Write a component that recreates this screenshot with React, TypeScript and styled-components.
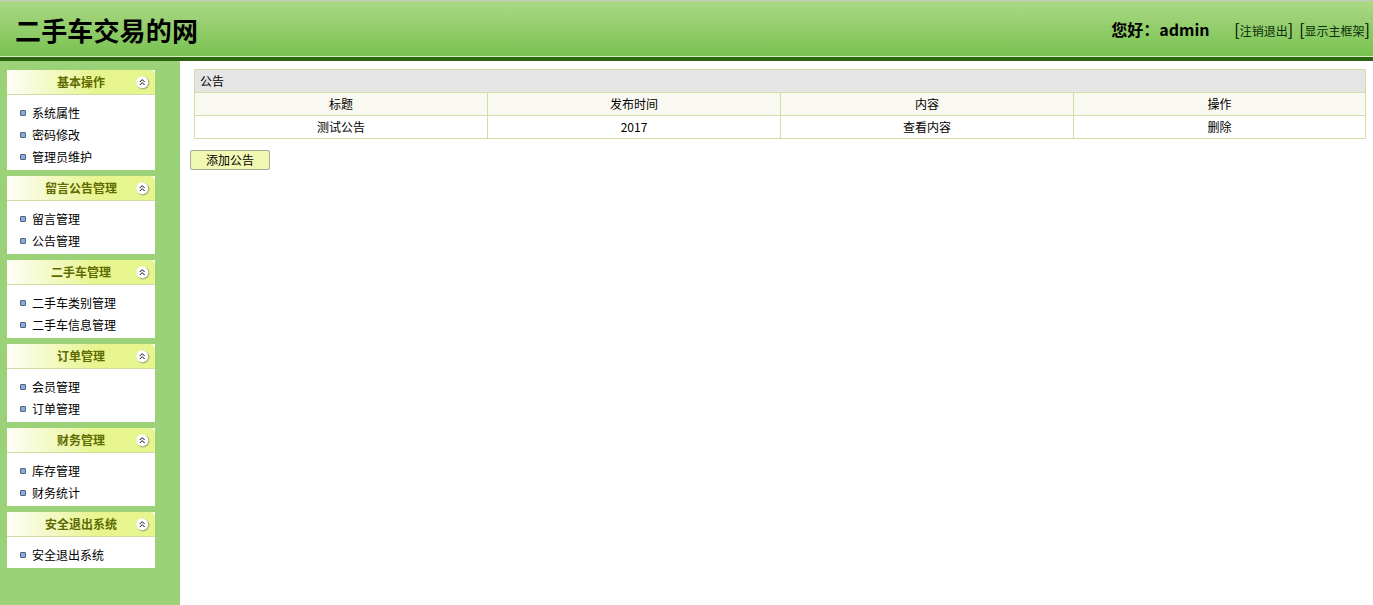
import React from "react";
import styled, { createGlobalStyle } from "styled-components";

const Global = createGlobalStyle`
  html, body { margin: 0; padding: 0; background: #fff; }
  body { font-family: "Liberation Sans", "Noto Sans CJK SC", sans-serif; font-size: 12px; color: #000; }
`;

const Page = styled.div`
  width: 1373px;
  height: 605px;
  display: flex;
  flex-direction: column;
  overflow: hidden;
`;

const Header = styled.header`
  height: 56px;
  flex: none;
  box-sizing: border-box;
  padding: 0 3px 0 15px;
  display: flex;
  align-items: center;
  justify-content: space-between;
  border-top: 1px solid #c8c8c8;
  background: linear-gradient(#acd886, #78c250);
`;

const Brand = styled.h1`
  margin: 3px 0 0;
  font-family: "Noto Sans CJK SC", sans-serif;
  font-size: 26px;
  font-weight: 700;
  letter-spacing: 0.15px;
  line-height: 60px;
  height: 60px;
`;

const HeaderRight = styled.div`
  display: flex;
  align-items: center;
  height: 60px;
  margin-top: 1px;
  font-family: "Noto Sans CJK SC", sans-serif;
`;

const Greeting = styled.span`
  font-size: 16px;
  font-weight: 700;
  width: 123px;
  white-space: nowrap;
`;

const Bracket = styled.a`
  font-size: 16px;
  margin-left: ${(p: { $gap: number }) => p.$gap}px;
  color: #000;
  white-space: nowrap;
  small { font-size: 12px; color: #0c2c0a; }
`;

const Rule = styled.div`
  flex: none;
  height: 5px;
  border-top: 1px solid #d6efc2;
  box-sizing: border-box;
  background: #2a6410;
`;

const Body = styled.div`
  flex: 1;
  display: flex;
  min-height: 0;
`;

const Sidebar = styled.aside`
  width: 180px;
  flex: none;
  box-sizing: border-box;
  padding: 9px 25px 0 7px;
  background: #9bd177;
  display: flex;
  flex-direction: column;
  gap: 6px;
`;

const Panel = styled.section`
  background: #fff;
`;

const PanelHead = styled.div`
  height: 25px;
  box-sizing: border-box;
  position: relative;
  padding-bottom: 2px;
  border-bottom: 1px solid #cfdca6;
  border-radius: 5px 5px 0 0;
  background: linear-gradient(to right, #fefef8, #e6f58e 60%, #e6f58e);
  display: flex;
  align-items: center;
  justify-content: center;
  font-family: "Noto Sans CJK SC", sans-serif;
  font-weight: 700;
  font-size: 12px;
  color: #5f6a00;
`;

const Toggle = styled.svg`
  position: absolute;
  right: 5px;
  top: 5px;
  width: 15px;
  height: 15px;
`;

const MenuList = styled.ul`
  list-style: none;
  margin: 0;
  padding: 7px 0 2px 13px;
  font-family: "Noto Sans CJK SC", sans-serif;
`;

const MenuItem = styled.li`
  height: 22px;
  line-height: 22px;
  display: flex;
  align-items: center;
  gap: 6px;
  font-size: 12px;
`;

const Bullet = styled.i`
  display: block;
  width: 4px;
  height: 4px;
  border: 1px solid #555f78;
  border-radius: 1px;
  background: #86aee6;
`;

const Main = styled.main`
  flex: 1;
  min-width: 0;
  padding: 8px 7px 0 10px;
  font-family: "Noto Sans CJK SC", sans-serif;
`;

const Table = styled.table`
  width: 1172px;
  margin-left: 4px;
  border-collapse: collapse;
  table-layout: fixed;
  font-size: 12px;
  td, th {
    border: 1px solid #d3dea6;
    padding: 0 0 2px;
    height: 20px;
    text-align: center;
    font-weight: 400;
  }
`;

const Column = styled.col<{ $width: number }>`
  width: ${(p) => p.$width}px;
`;

const TitleCell = styled.th`
  && { text-align: left; padding-left: 5px; background: #e5e5e5; }
`;

const HeadRow = styled.tr`
  background: #f9f9f1;
`;

const AddButton = styled.button`
  display: block;
  margin-top: 11px;
  width: 80px;
  height: 20px;
  padding: 0 0 2px;
  box-sizing: border-box;
  border: 1px solid #a9aa98;
  border-radius: 2px;
  background: #f1f8b4;
  font-family: inherit;
  font-size: 12px;
  color: #000;
`;

const menus = [
  ["基本操作", ["系统属性", "密码修改", "管理员维护"]],
  ["留言公告管理", ["留言管理", "公告管理"]],
  ["二手车管理", ["二手车类别管理", "二手车信息管理"]],
  ["订单管理", ["会员管理", "订单管理"]],
  ["财务管理", ["库存管理", "财务统计"]],
  ["安全退出系统", ["安全退出系统"]],
] as [string, string[]][];

const CollapseIcon = () => (
  <Toggle viewBox="0 0 15 15" aria-hidden="true">
    <circle cx="8" cy="8" r="6.5" fill="#8f9a7c" opacity="0.7" />
    <circle cx="7.2" cy="7.2" r="6" fill="#fff" />
    <path d="M4.8 7 L7.2 4.6 L9.6 7 M4.8 10 L7.2 7.6 L9.6 10" fill="none" stroke="#111" strokeWidth="1" />
  </Toggle>
);

export default function App() {
  return (
    <Page>
      <Global />
      <Header>
        <Brand>二手车交易的网</Brand>
        <HeaderRight>
          <Greeting>您好：admin</Greeting>
          <Bracket $gap={0}>[<small>注销退出</small>]</Bracket>
          <Bracket $gap={6}>[<small>显示主框架</small>]</Bracket>
        </HeaderRight>
      </Header>
      <Rule />
      <Body>
        <Sidebar>
          {menus.map(([title, items]) => (
            <Panel key={title}>
              <PanelHead>
                {title}
                <CollapseIcon />
              </PanelHead>
              <MenuList>
                {items.map((item) => (
                  <MenuItem key={item}>
                    <Bullet />
                    {item}
                  </MenuItem>
                ))}
              </MenuList>
            </Panel>
          ))}
        </Sidebar>
        <Main>
          <Table>
            <colgroup>
              <Column $width={293} />
              <Column $width={293} />
              <Column $width={293} />
              <Column $width={292} />
            </colgroup>
            <thead>
              <tr>
                <TitleCell colSpan={4}>公告</TitleCell>
              </tr>
              <HeadRow>
                <th>标题</th>
                <th>发布时间</th>
                <th>内容</th>
                <th>操作</th>
              </HeadRow>
            </thead>
            <tbody>
              <tr>
                <td>测试公告</td>
                <td>2017</td>
                <td>查看内容</td>
                <td>删除</td>
              </tr>
            </tbody>
          </Table>
          <AddButton type="button">添加公告</AddButton>
        </Main>
      </Body>
    </Page>
  );
}
